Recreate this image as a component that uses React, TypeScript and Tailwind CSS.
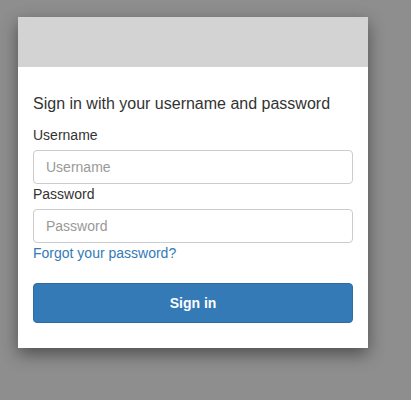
import React from "react";

export default function App() {
  return (
    <div
      className="min-h-[400px] w-full bg-[#8e8e8e] pl-[18px] pt-[17px]"
      style={{ fontFamily: '"Liberation Sans", Arial, Helvetica, sans-serif' }}
    >
      <div className="w-[350px] bg-white shadow-[0_6px_16px_rgba(0,0,0,0.45)]">
        <div className="h-[50px] bg-[#d3d3d3]" />
        <div className="px-[15px] pt-[25px] pb-[25px]">
          <div className="text-[16px] leading-[23px] text-[#333]">
            Sign in with your username and password
          </div>
          <div className="mt-[10px] text-[14px] leading-[20px] text-[#333]">Username</div>
          <input
            className="mt-[5px] block h-[34px] w-[320px] rounded-[4px] border border-[#ccc] px-[12px] text-[14px] text-[#555] placeholder:text-[#999] outline-none"
            placeholder="Username"
          />
          <div className="text-[14px] leading-[20px] text-[#333]">Password</div>
          <input
            type="password"
            className="mt-[5px] block h-[34px] w-[320px] rounded-[4px] border border-[#ccc] px-[12px] text-[14px] text-[#555] placeholder:text-[#999] outline-none"
            placeholder="Password"
          />
          <a className="block text-[14px] leading-[20px] text-[#337ab7]" href="#">
            Forgot your password?
          </a>
          <button className="mt-[20px] block h-[40px] w-[320px] rounded-[4px] border border-[#2e6da4] bg-[#337ab7] text-[14px] font-bold text-white">
            Sign in
          </button>
        </div>
      </div>
    </div>
  );
}
